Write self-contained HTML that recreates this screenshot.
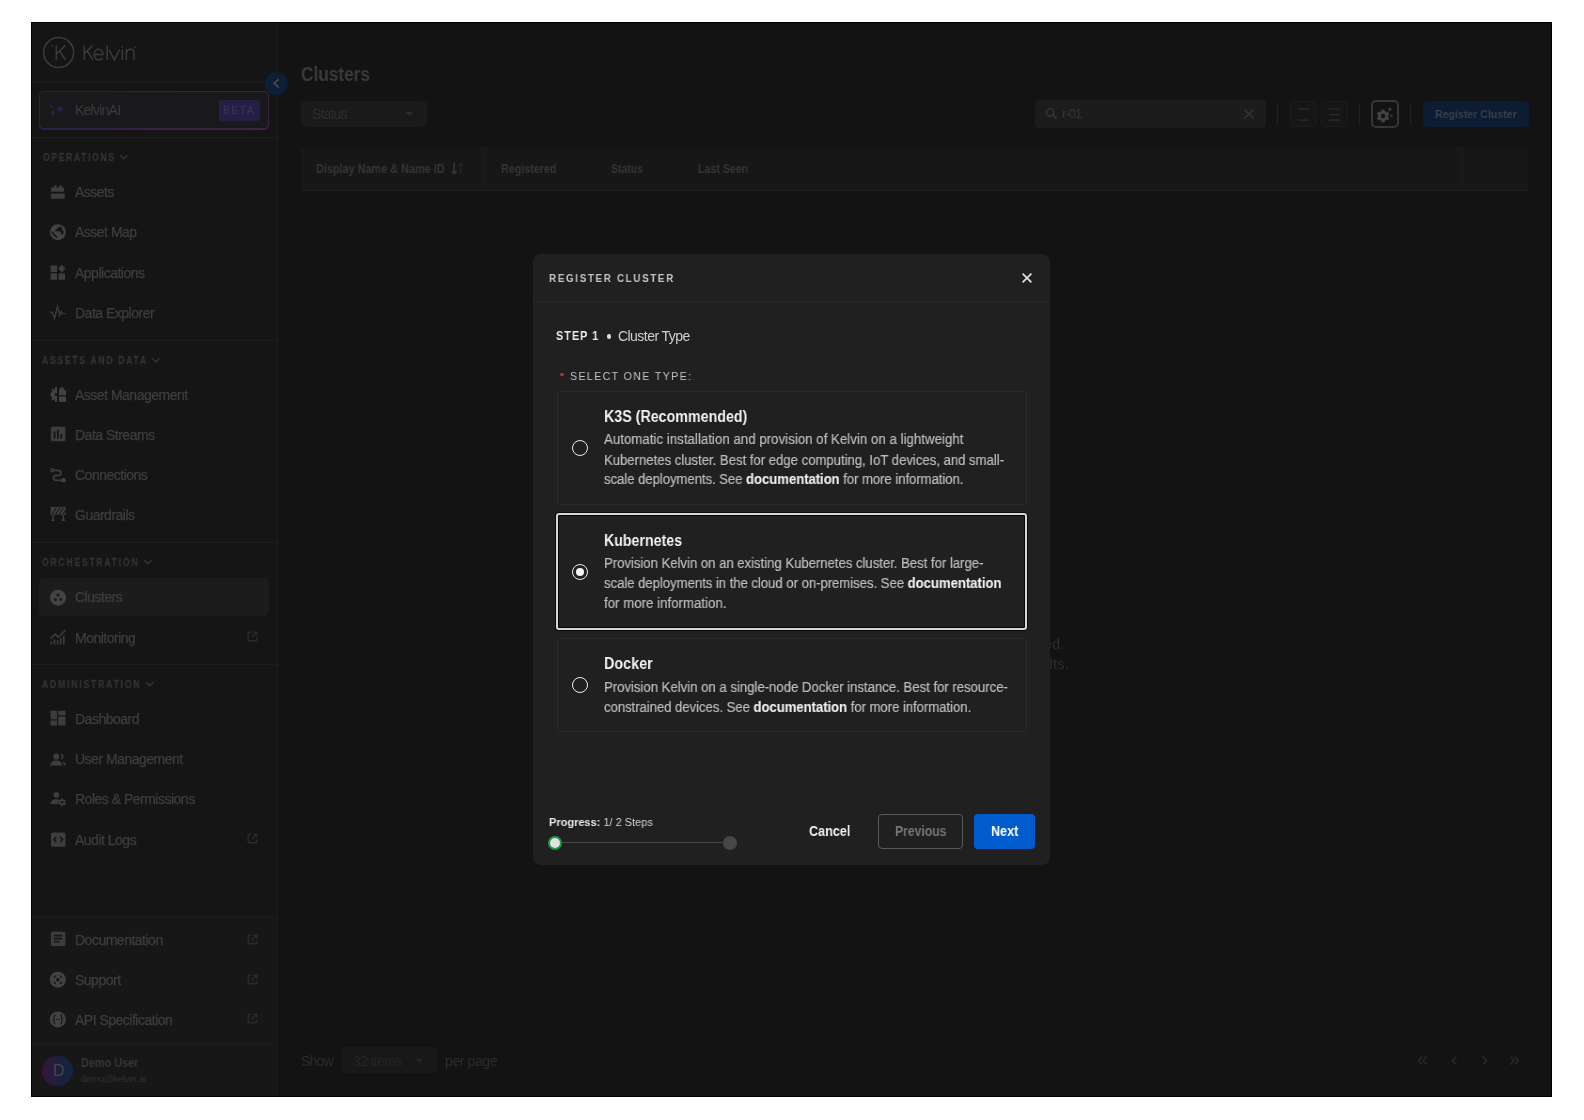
<!DOCTYPE html><html><head><meta charset="utf-8"><style>html,body{margin:0;padding:0;background:#fff;width:1584px;height:1120px;overflow:hidden}body{position:relative;font-family:"Liberation Sans", sans-serif}div[id^=t]{will-change:transform}b{font-weight:700}</style></head><body>
<div style="position:absolute;left:31px;top:22px;width:1521px;height:1075px;background:#000"></div>
<div style="position:absolute;left:32px;top:23px;width:1519px;height:1073px;background:#131313"></div>
<div style="position:absolute;left:32px;top:23px;width:245px;height:1073px;background:#151515"></div>
<div style="position:absolute;left:277px;top:23px;width:1px;height:1073px;background:#1b1b1b"></div>
<div style="position:absolute;left:32px;top:916px;width:245px;height:180px;background:#171717"></div>
<div style="position:absolute;left:32px;top:82px;width:245px;height:1px;background:#1c1c1c"></div>
<div style="position:absolute;left:32px;top:137px;width:245px;height:1px;background:#1c1c1c"></div>
<div style="position:absolute;left:32px;top:340px;width:245px;height:1px;background:#1c1c1c"></div>
<div style="position:absolute;left:32px;top:542px;width:245px;height:1px;background:#1c1c1c"></div>
<div style="position:absolute;left:32px;top:664px;width:245px;height:1px;background:#1c1c1c"></div>
<div style="position:absolute;left:32px;top:916px;width:245px;height:1px;background:#1c1c1c"></div>
<div style="position:absolute;left:32px;top:1043px;width:245px;height:1px;background:#1c1c1c"></div>
<svg style="position:absolute;left:40px;top:34px;overflow:visible" width="100" height="40" viewBox="0 0 100 40"><circle cx="18.65" cy="18.5" r="15" fill="none" stroke="#3b3b3b" stroke-width="1.5"/><path d="M16.3 11.4V25.9M25.4 11.4L16.5 19.7M19.6 17.0L25.4 25.9" fill="none" stroke="#3b3b3b" stroke-width="1.5"/><circle cx="12.3" cy="12.2" r="0.8" fill="#3b3b3b"/><path d="M44.3 11.4V25.9M52.6 11.4L44.6 19.6M47.3 17.0L52.8 25.9" fill="none" stroke="#3b3b3b" stroke-width="1.5"/><path d="M54.4 20.6H63.0C63.0 17.6 61.2 15.3 58.6 15.3C55.9 15.3 54.2 17.6 54.2 20.5C54.2 23.5 56.1 25.9 58.8 25.9C60.5 25.9 61.8 25.1 62.6 23.9" fill="none" stroke="#3b3b3b" stroke-width="1.5"/><path d="M67.2 11.2V25.9M69.1 15.5L74.3 25.9L79.5 15.5M82.3 15.5V25.9M86.4 15.5V25.9M86.4 19.0C87.2 16.2 89.0 15.3 90.6 15.3C92.8 15.3 94.0 16.7 94.0 19.3V25.9" fill="none" stroke="#3b3b3b" stroke-width="1.5"/><circle cx="82.3" cy="12.6" r="0.9" fill="#3b3b3b"/><circle cx="95.2" cy="13.3" r="0.9" fill="#3b3b3b"/></svg>
<div style="position:absolute;left:265.1px;top:71.8px;width:23.4px;height:23.4px;border-radius:50%;background:#0d1f37"></div>
<svg style="position:absolute;left:270px;top:75px;overflow:visible" width="12" height="16" viewBox="0 0 12 16"><path d="M8.8 4.1L4.2 8.3L8.8 12.6" fill="none" stroke="#454545" stroke-width="1.9"/></svg>
<div style="position:absolute;left:38.5px;top:91px;width:230.5px;height:38.5px;background:linear-gradient(90deg,#2d1d4c,#3f2342);border-radius:5px"></div>
<div style="position:absolute;left:39.9px;top:92.4px;width:227.70000000000002px;height:35.69999999999999px;background:#19181a;border-radius:4px"></div>
<svg style="position:absolute;left:46px;top:100px;overflow:visible" width="20" height="20" viewBox="0 0 20 20"><path d="M13.9 4.8Q14.6 8.6 18.4 9.3Q14.6 10.0 13.9 13.8Q13.2 10.0 9.4 9.3Q13.2 8.6 13.9 4.8Z" fill="#2e1e50"/><path d="M6.9 10.1Q7.3 12.7 9.9 13.1Q7.3 13.5 6.9 16.1Q6.5 13.5 3.9 13.1Q6.5 12.7 6.9 10.1Z" fill="#2e1e50"/><circle cx="5.2" cy="6.3" r="1.3" fill="#2e1e50"/></svg>
<div id="t0" style="position:absolute;left:74.80px;top:103.10px;font-size:14px;line-height:1;font-weight:400;color:#3c3c3c;letter-spacing:-0.751px;white-space:nowrap;">KelvinAI</div>
<div style="position:absolute;left:219.3px;top:99.7px;width:40.39999999999998px;height:21.099999999999994px;background:#261f45;border-radius:3px"></div>
<div id="t1" style="position:absolute;left:223.40px;top:104.65px;font-size:11px;line-height:1;font-weight:400;color:#3c3658;letter-spacing:2.026px;white-space:nowrap;transform:scaleX(0.9000);transform-origin:0 0;">BETA</div>
<div id="t2" style="position:absolute;left:42.50px;top:152.70px;font-size:10px;line-height:1;font-weight:700;color:#333333;letter-spacing:1.908px;white-space:nowrap;transform:scaleX(0.8600);transform-origin:0 0;-webkit-text-stroke:0.3px #333333">OPERATIONS</div>
<svg style="position:absolute;left:118.5px;top:153.1px;overflow:visible" width="10" height="8" viewBox="0 0 10 8"><path d="M1.2 2.2L4.8 5.8L8.4 2.2" fill="none" stroke="#353535" stroke-width="1.4"/></svg>
<div id="t3" style="position:absolute;left:42.20px;top:355.60px;font-size:10px;line-height:1;font-weight:700;color:#333333;letter-spacing:1.984px;white-space:nowrap;transform:scaleX(0.8600);transform-origin:0 0;-webkit-text-stroke:0.3px #333333">ASSETS AND DATA</div>
<svg style="position:absolute;left:151.2px;top:356.0px;overflow:visible" width="10" height="8" viewBox="0 0 10 8"><path d="M1.2 2.2L4.8 5.8L8.4 2.2" fill="none" stroke="#353535" stroke-width="1.4"/></svg>
<div id="t4" style="position:absolute;left:42.20px;top:557.80px;font-size:10px;line-height:1;font-weight:700;color:#333333;letter-spacing:2.057px;white-space:nowrap;transform:scaleX(0.8600);transform-origin:0 0;-webkit-text-stroke:0.3px #333333">ORCHESTRATION</div>
<svg style="position:absolute;left:142.8px;top:558.2px;overflow:visible" width="10" height="8" viewBox="0 0 10 8"><path d="M1.2 2.2L4.8 5.8L8.4 2.2" fill="none" stroke="#353535" stroke-width="1.4"/></svg>
<div id="t5" style="position:absolute;left:42.20px;top:679.70px;font-size:10px;line-height:1;font-weight:700;color:#333333;letter-spacing:2.112px;white-space:nowrap;transform:scaleX(0.8600);transform-origin:0 0;-webkit-text-stroke:0.3px #333333">ADMINISTRATION</div>
<svg style="position:absolute;left:144.7px;top:680.1px;overflow:visible" width="10" height="8" viewBox="0 0 10 8"><path d="M1.2 2.2L4.8 5.8L8.4 2.2" fill="none" stroke="#353535" stroke-width="1.4"/></svg>
<div style="position:absolute;left:39px;top:578px;width:230px;height:38px;background:#1c1c1c;border-radius:5px"></div>
<div id="t6" style="position:absolute;left:75.40px;top:185.10px;font-size:14px;line-height:1;font-weight:400;color:#3e3e3e;letter-spacing:-0.500px;white-space:nowrap;-webkit-text-stroke:0.25px #3e3e3e">Assets</div>
<div id="t7" style="position:absolute;left:75.40px;top:225.40px;font-size:14px;line-height:1;font-weight:400;color:#3e3e3e;letter-spacing:-0.500px;white-space:nowrap;-webkit-text-stroke:0.25px #3e3e3e">Asset Map</div>
<div id="t8" style="position:absolute;left:75.40px;top:265.60px;font-size:14px;line-height:1;font-weight:400;color:#3e3e3e;letter-spacing:-0.500px;white-space:nowrap;-webkit-text-stroke:0.25px #3e3e3e">Applications</div>
<div id="t9" style="position:absolute;left:75.40px;top:305.80px;font-size:14px;line-height:1;font-weight:400;color:#3e3e3e;letter-spacing:-0.500px;white-space:nowrap;-webkit-text-stroke:0.25px #3e3e3e">Data Explorer</div>
<div id="t10" style="position:absolute;left:75.40px;top:387.80px;font-size:14px;line-height:1;font-weight:400;color:#3e3e3e;letter-spacing:-0.500px;white-space:nowrap;-webkit-text-stroke:0.25px #3e3e3e">Asset Management</div>
<div id="t11" style="position:absolute;left:75.40px;top:427.70px;font-size:14px;line-height:1;font-weight:400;color:#3e3e3e;letter-spacing:-0.500px;white-space:nowrap;-webkit-text-stroke:0.25px #3e3e3e">Data Streams</div>
<div id="t12" style="position:absolute;left:75.40px;top:468.10px;font-size:14px;line-height:1;font-weight:400;color:#3e3e3e;letter-spacing:-0.500px;white-space:nowrap;-webkit-text-stroke:0.25px #3e3e3e">Connections</div>
<div id="t13" style="position:absolute;left:75.40px;top:508.10px;font-size:14px;line-height:1;font-weight:400;color:#3e3e3e;letter-spacing:-0.500px;white-space:nowrap;-webkit-text-stroke:0.25px #3e3e3e">Guardrails</div>
<div id="t14" style="position:absolute;left:75.40px;top:590.10px;font-size:14px;line-height:1;font-weight:400;color:#3e3e3e;letter-spacing:-0.500px;white-space:nowrap;-webkit-text-stroke:0.25px #3e3e3e">Clusters</div>
<div id="t15" style="position:absolute;left:75.40px;top:630.60px;font-size:14px;line-height:1;font-weight:400;color:#3e3e3e;letter-spacing:-0.500px;white-space:nowrap;-webkit-text-stroke:0.25px #3e3e3e">Monitoring</div>
<div id="t16" style="position:absolute;left:75.40px;top:712.10px;font-size:14px;line-height:1;font-weight:400;color:#3e3e3e;letter-spacing:-0.500px;white-space:nowrap;-webkit-text-stroke:0.25px #3e3e3e">Dashboard</div>
<div id="t17" style="position:absolute;left:75.40px;top:752.40px;font-size:14px;line-height:1;font-weight:400;color:#3e3e3e;letter-spacing:-0.500px;white-space:nowrap;-webkit-text-stroke:0.25px #3e3e3e">User Management</div>
<div id="t18" style="position:absolute;left:75.40px;top:792.40px;font-size:14px;line-height:1;font-weight:400;color:#3e3e3e;letter-spacing:-0.500px;white-space:nowrap;-webkit-text-stroke:0.25px #3e3e3e">Roles &amp; Permissions</div>
<div id="t19" style="position:absolute;left:75.40px;top:832.80px;font-size:14px;line-height:1;font-weight:400;color:#3e3e3e;letter-spacing:-0.500px;white-space:nowrap;-webkit-text-stroke:0.25px #3e3e3e">Audit Logs</div>
<div id="t20" style="position:absolute;left:75.40px;top:933.10px;font-size:14px;line-height:1;font-weight:400;color:#3e3e3e;letter-spacing:-0.500px;white-space:nowrap;-webkit-text-stroke:0.25px #3e3e3e">Documentation</div>
<div id="t21" style="position:absolute;left:75.40px;top:973.40px;font-size:14px;line-height:1;font-weight:400;color:#3e3e3e;letter-spacing:-0.500px;white-space:nowrap;-webkit-text-stroke:0.25px #3e3e3e">Support</div>
<div id="t22" style="position:absolute;left:75.40px;top:1012.70px;font-size:14px;line-height:1;font-weight:400;color:#3e3e3e;letter-spacing:-0.500px;white-space:nowrap;-webkit-text-stroke:0.25px #3e3e3e">API Specification</div>
<svg style="position:absolute;left:50px;top:183px;overflow:visible" width="16" height="16" viewBox="0 0 16 16"><path d="M2.5 4.6H4.3V3.3A1.2 1.2 0 0 1 6.7 3.3V4.6H9.3V3.3A1.2 1.2 0 0 1 11.7 3.3V4.6H14V8.8H1.1V4.6Z" fill="#3d3d3d"/><rect x="1.1" y="10.6" width="13.6" height="5.1" fill="#3d3d3d"/></svg>
<svg style="position:absolute;left:50px;top:223.3px;overflow:visible" width="16" height="16" viewBox="0 0 16 16"><circle cx="7.95" cy="9.2" r="8" fill="#424242"/><path d="M1.9 8.95Q4.6 11.4 6.8 14.45Q4 12.4 1.9 8.95Z" fill="#151515" stroke="#151515" stroke-width="1.3" stroke-linejoin="round"/><path d="M10.75 3.6L7.4 5.4L5.25 8H10L12.3 12.1L13.3 8.95Z" fill="#151515" stroke="#151515" stroke-width="0.6" stroke-linejoin="round"/></svg>
<svg style="position:absolute;left:50px;top:263.5px;overflow:visible" width="16" height="16" viewBox="0 0 16 16"><rect x="0.5" y="1.5" width="6.5" height="6.5" fill="#3d3d3d"/><path d="M11.8 0.8L15.5 4.6L11.8 8.4L8.1 4.6Z" fill="#3d3d3d"/><rect x="0.5" y="9.3" width="6.5" height="6.5" fill="#3d3d3d"/><rect x="8.5" y="9.3" width="6.5" height="6.5" fill="#3d3d3d"/></svg>
<svg style="position:absolute;left:50px;top:303.7px;overflow:visible" width="16" height="16" viewBox="0 0 16 16"><path d="M0.3 8.3H2.4L4.6 14.2L7.5 2.6L9.9 11.1L11.3 7.6L12.9 9.6H15.5" fill="none" stroke="#3d3d3d" stroke-width="1.4"/></svg>
<svg style="position:absolute;left:50px;top:385.7px;overflow:visible" width="16" height="16" viewBox="0 0 16 16"><path d="M6 3.3A5.2 5.2 0 0 0 6 13.7Z" fill="#424242"/><path d="M0.2 7.4H2.2V9.6H0.2Z M1.3 3.6L2.9 2.6L4.3 4.4L2.7 5.5Z M1.3 13.4L2.9 14.4L4.3 12.6L2.7 11.5Z" fill="#424242"/><rect x="4.9" y="1" width="2.1" height="14.9" fill="#424242"/><circle cx="6.2" cy="8.5" r="1.5" fill="#151515"/><path d="M9 4.3H9.6V3.2A1.9 1.9 0 0 1 11.5 1.2H12.1A1.9 1.9 0 0 1 14 3.2V4.3H16V8.9H9Z" fill="#424242"/><rect x="9" y="10.4" width="7" height="5.5" fill="#424242"/></svg>
<svg style="position:absolute;left:50px;top:425.6px;overflow:visible" width="16" height="16" viewBox="0 0 16 16"><rect x="0.8" y="0.8" width="14.6" height="14.4" rx="1.6" fill="#3d3d3d"/><rect x="3.6" y="5.6" width="1.8" height="7" fill="#151515"/><rect x="7" y="3.8" width="1.8" height="8.8" fill="#151515"/><rect x="10.4" y="8.2" width="1.8" height="4.4" fill="#151515"/></svg>
<svg style="position:absolute;left:50px;top:466px;overflow:visible" width="16" height="16" viewBox="0 0 16 16"><circle cx="2.3" cy="4.3" r="1.4" fill="none" stroke="#3e3e3e" stroke-width="1.5"/><path d="M3.8 4.3H8.5A2.5 2.5 0 0 1 8.5 9.3H6A2.5 2.5 0 0 0 6 14.3H12" fill="none" stroke="#3e3e3e" stroke-width="1.7"/><circle cx="13.6" cy="14.3" r="2.2" fill="#434343"/></svg>
<svg style="position:absolute;left:50px;top:506px;overflow:visible" width="16" height="16" viewBox="0 0 16 16"><rect x="0.6" y="0.8" width="15" height="8" fill="#3d3d3d"/><path d="M2.3 8.3L6.2 1.4M5.9 8.3L9.8 1.4M9.5 8.3L13.4 1.4M13.1 8.3L15.6 3.9" stroke="#151515" stroke-width="1"/><path d="M3 9V14.3M13.2 9V14.3M1.3 14.3H4.7M11.5 14.3H14.9" stroke="#3d3d3d" stroke-width="1.5"/></svg>
<svg style="position:absolute;left:50px;top:588px;overflow:visible" width="16" height="16" viewBox="0 0 16 16"><circle cx="8" cy="9.7" r="8" fill="#434343"/><circle cx="8" cy="7" r="1.6" fill="#1c1c1c"/><circle cx="5.3" cy="11.5" r="1.6" fill="#1c1c1c"/><circle cx="10.7" cy="11.5" r="1.6" fill="#1c1c1c"/></svg>
<svg style="position:absolute;left:50px;top:628.5px;overflow:visible" width="16" height="16" viewBox="0 0 16 16"><path d="M0.6 9.6L5.1 5.2L8.4 8.2L15.4 1.2" fill="none" stroke="#3d3d3d" stroke-width="1.6"/><path d="M1.4 12.6V15.6M4.5 10.6V15.6M7.6 11.2V15.6M10.7 8.8V15.6M13.8 6.6V15.6" stroke="#3d3d3d" stroke-width="1.7"/></svg>
<svg style="position:absolute;left:50px;top:710px;overflow:visible" width="16" height="16" viewBox="0 0 16 16"><rect x="0.5" y="0.7" width="6.5" height="8.6" fill="#3d3d3d"/><rect x="8.2" y="0.7" width="7.3" height="4.6" fill="#3d3d3d"/><rect x="0.5" y="10.5" width="6.5" height="5" fill="#3d3d3d"/><rect x="8.2" y="6.5" width="7.3" height="9" fill="#3d3d3d"/></svg>
<svg style="position:absolute;left:50px;top:751.6999999999999px;overflow:visible" width="16" height="16" viewBox="0 0 16 16"><circle cx="6.2" cy="4.6" r="3.1" fill="#3d3d3d"/><path d="M0.2 13.5C0.2 10.3 2.6 8.6 6.2 8.6C9.8 8.6 12.2 10.3 12.2 13.5Z" fill="#3d3d3d"/><path d="M10.4 1.5A3.1 3.1 0 0 1 10.4 7.7A4.2 4.2 0 0 0 10.4 1.5Z" fill="#3d3d3d"/><path d="M12.3 9.2C14.5 9.9 16 11.4 16 13.5H13.6C13.6 11.8 13.2 10.4 12.3 9.2Z" fill="#3d3d3d"/></svg>
<svg style="position:absolute;left:50px;top:791.3px;overflow:visible" width="16" height="16" viewBox="0 0 16 16"><circle cx="6.4" cy="3.8" r="2.9" fill="#3d3d3d"/><path d="M0.4 13.1C0.4 10.1 2.8 8.2 6.2 8.2C7.2 8.2 8 8.3 8.6 8.6L8.2 13.1Z" fill="#3d3d3d"/><path d="M12.98 14.27L13.04 15.29L11.16 15.29L11.22 14.27L9.97 13.55L9.11 14.11L8.17 12.49L9.09 12.02L9.09 10.58L8.17 10.11L9.11 8.49L9.97 9.05L11.22 8.33L11.16 7.31L13.04 7.31L12.98 8.33L14.23 9.05L15.09 8.49L16.03 10.11L15.11 10.58L15.11 12.02L16.03 12.49L15.09 14.11L14.23 13.55Z" fill="#3d3d3d"/><circle cx="12.1" cy="11.3" r="1.3" fill="#151515"/></svg>
<svg style="position:absolute;left:50px;top:830.7px;overflow:visible" width="16" height="16" viewBox="0 0 16 16"><rect x="1" y="1.4" width="14.4" height="14.4" rx="1.6" fill="#3d3d3d"/><path d="M6.2 6L3.9 8.6L6.2 11.2M10.2 6L12.5 8.6L10.2 11.2" fill="none" stroke="#151515" stroke-width="1.6"/></svg>
<svg style="position:absolute;left:50px;top:931px;overflow:visible" width="16" height="16" viewBox="0 0 16 16"><rect x="1" y="0.7" width="14.4" height="14.4" rx="1.6" fill="#3d3d3d"/><path d="M3.8 4.6H12.3M3.8 7.6H12.3M3.8 10.6H9.4" stroke="#171717" stroke-width="1.6"/></svg>
<svg style="position:absolute;left:50px;top:971.3px;overflow:visible" width="16" height="16" viewBox="0 0 16 16"><circle cx="7.86" cy="8.7" r="8" fill="#424242"/><circle cx="7.86" cy="8.7" r="1.8" fill="#171717"/><rect x="-1.6" y="-0.75" width="3.2" height="1.5" rx="0.7" fill="#171717" transform="translate(7.86 8.7) rotate(45) translate(0 -4.4)"/><rect x="-1.6" y="-0.75" width="3.2" height="1.5" rx="0.7" fill="#171717" transform="translate(7.86 8.7) rotate(135) translate(0 -4.4)"/><rect x="-1.6" y="-0.75" width="3.2" height="1.5" rx="0.7" fill="#171717" transform="translate(7.86 8.7) rotate(225) translate(0 -4.4)"/><rect x="-1.6" y="-0.75" width="3.2" height="1.5" rx="0.7" fill="#171717" transform="translate(7.86 8.7) rotate(315) translate(0 -4.4)"/></svg>
<svg style="position:absolute;left:50px;top:1010.5999999999999px;overflow:visible" width="16" height="16" viewBox="0 0 16 16"><circle cx="7.86" cy="8.4" r="8" fill="#424242"/><path d="M5.4 3.8C4 3.8 4.1 5.8 4.1 6.8C4.1 7.6 3.5 8.3 2.8 8.4C3.5 8.5 4.1 9.2 4.1 10C4.1 11 4 13 5.4 13M10.3 3.8C11.7 3.8 11.6 5.8 11.6 6.8C11.6 7.6 12.2 8.3 12.9 8.4C12.2 8.5 11.6 9.2 11.6 10C11.6 11 11.7 13 10.3 13" fill="none" stroke="#171717" stroke-width="1.2"/><circle cx="6.3" cy="8.4" r="0.6" fill="#171717"/><circle cx="7.86" cy="8.4" r="0.6" fill="#171717"/><circle cx="9.4" cy="8.4" r="0.6" fill="#171717"/></svg>
<svg style="position:absolute;left:246.5px;top:631.0px;overflow:visible" width="11" height="11" viewBox="0 0 11 11"><path d="M4.4 1.2H2.2A1 1 0 0 0 1.2 2.2V8.8A1 1 0 0 0 2.2 9.8H8.8A1 1 0 0 0 9.8 8.8V6.6" fill="none" stroke="#2b2b2b" stroke-width="1.4"/><path d="M4.8 6.2L9.8 1.2M6.6 1.2H9.8V4.4" fill="none" stroke="#2b2b2b" stroke-width="1.4"/></svg>
<svg style="position:absolute;left:246.5px;top:833.2px;overflow:visible" width="11" height="11" viewBox="0 0 11 11"><path d="M4.4 1.2H2.2A1 1 0 0 0 1.2 2.2V8.8A1 1 0 0 0 2.2 9.8H8.8A1 1 0 0 0 9.8 8.8V6.6" fill="none" stroke="#2b2b2b" stroke-width="1.4"/><path d="M4.8 6.2L9.8 1.2M6.6 1.2H9.8V4.4" fill="none" stroke="#2b2b2b" stroke-width="1.4"/></svg>
<svg style="position:absolute;left:246.5px;top:933.5px;overflow:visible" width="11" height="11" viewBox="0 0 11 11"><path d="M4.4 1.2H2.2A1 1 0 0 0 1.2 2.2V8.8A1 1 0 0 0 2.2 9.8H8.8A1 1 0 0 0 9.8 8.8V6.6" fill="none" stroke="#2b2b2b" stroke-width="1.4"/><path d="M4.8 6.2L9.8 1.2M6.6 1.2H9.8V4.4" fill="none" stroke="#2b2b2b" stroke-width="1.4"/></svg>
<svg style="position:absolute;left:246.5px;top:973.8px;overflow:visible" width="11" height="11" viewBox="0 0 11 11"><path d="M4.4 1.2H2.2A1 1 0 0 0 1.2 2.2V8.8A1 1 0 0 0 2.2 9.8H8.8A1 1 0 0 0 9.8 8.8V6.6" fill="none" stroke="#2b2b2b" stroke-width="1.4"/><path d="M4.8 6.2L9.8 1.2M6.6 1.2H9.8V4.4" fill="none" stroke="#2b2b2b" stroke-width="1.4"/></svg>
<svg style="position:absolute;left:246.5px;top:1013.0999999999999px;overflow:visible" width="11" height="11" viewBox="0 0 11 11"><path d="M4.4 1.2H2.2A1 1 0 0 0 1.2 2.2V8.8A1 1 0 0 0 2.2 9.8H8.8A1 1 0 0 0 9.8 8.8V6.6" fill="none" stroke="#2b2b2b" stroke-width="1.4"/><path d="M4.8 6.2L9.8 1.2M6.6 1.2H9.8V4.4" fill="none" stroke="#2b2b2b" stroke-width="1.4"/></svg>
<div style="position:absolute;left:42.3px;top:1055.8px;width:30.6px;height:30.6px;border-radius:50%;background:linear-gradient(90deg,#33163a,#0f2640)"></div>
<div id="t23" style="position:absolute;left:52.60px;top:1063.20px;font-size:16px;line-height:1;font-weight:400;color:#474747;letter-spacing:-1.062px;white-space:nowrap;">D</div>
<div id="t24" style="position:absolute;left:81.30px;top:1056.70px;font-size:12px;line-height:1;font-weight:700;color:#363636;letter-spacing:0.000px;white-space:nowrap;transform:scaleX(0.9044);transform-origin:0 0;">Demo User</div>
<div id="t25" style="position:absolute;left:81.30px;top:1074.42px;font-size:9.5px;line-height:1;font-weight:400;color:#313131;letter-spacing:-0.195px;white-space:nowrap;">demo@kelvin.ai</div>
<div id="t26" style="position:absolute;left:301.30px;top:64.00px;font-size:20px;line-height:1;font-weight:700;color:#3a3a3a;letter-spacing:0.000px;white-space:nowrap;transform:scaleX(0.8622);transform-origin:0 0;">Clusters</div>
<div style="position:absolute;left:301.3px;top:100.9px;width:126.0px;height:26.599999999999994px;background:#1a1a1a;border-radius:4px"></div>
<div id="t27" style="position:absolute;left:311.70px;top:107.20px;font-size:14px;line-height:1;font-weight:400;color:#2e2e2e;letter-spacing:-0.841px;white-space:nowrap;">Status</div>
<svg style="position:absolute;left:405px;top:111px;overflow:visible" width="9" height="6" viewBox="0 0 9 6"><path d="M0.6 1H8.2L4.4 5Z" fill="#2e2e2e"/></svg>
<div style="position:absolute;left:301px;top:146.9px;width:1227.4px;height:43.099999999999994px;background:#171717"></div>
<div style="position:absolute;left:301px;top:190px;width:1227.4px;height:1px;background:#1d1d1d"></div>
<div style="position:absolute;left:484.3px;top:146.9px;width:1.0px;height:43.099999999999994px;background:#1b1b1b"></div>
<div style="position:absolute;left:1461.8px;top:146.9px;width:1.0px;height:43.099999999999994px;background:#1b1b1b"></div>
<div id="t28" style="position:absolute;left:316.40px;top:162.80px;font-size:12px;line-height:1;font-weight:700;color:#363636;letter-spacing:0.000px;white-space:nowrap;transform:scaleX(0.9052);transform-origin:0 0;">Display Name &amp; Name ID</div>
<svg style="position:absolute;left:451px;top:162px;overflow:visible" width="14" height="13" viewBox="0 0 14 13"><path d="M3.2 1V11.4M0.9 9L3.2 11.6L5.5 9" fill="none" stroke="#353535" stroke-width="1.6"/><path d="M9.8 11.6V1.4M8.1 3.4L9.8 1.2L11.5 3.4" fill="none" stroke="#303030" stroke-width="0.9"/></svg>
<div id="t29" style="position:absolute;left:500.50px;top:162.80px;font-size:12px;line-height:1;font-weight:700;color:#363636;letter-spacing:0.000px;white-space:nowrap;transform:scaleX(0.8931);transform-origin:0 0;">Registered</div>
<div id="t30" style="position:absolute;left:611.00px;top:162.80px;font-size:12px;line-height:1;font-weight:700;color:#363636;letter-spacing:0.000px;white-space:nowrap;transform:scaleX(0.8695);transform-origin:0 0;">Status</div>
<div id="t31" style="position:absolute;left:698.20px;top:162.80px;font-size:12px;line-height:1;font-weight:700;color:#363636;letter-spacing:0.000px;white-space:nowrap;transform:scaleX(0.8853);transform-origin:0 0;">Last Seen</div>
<div id="t32" style="position:absolute;left:851.00px;top:637.10px;font-size:14px;line-height:1;font-weight:400;color:#2e2e2e;letter-spacing:0.114px;white-space:nowrap;">No clusters have been registered.</div>
<div id="t33" style="position:absolute;left:806.50px;top:657.10px;font-size:14px;line-height:1;font-weight:400;color:#2e2e2e;letter-spacing:0.558px;white-space:nowrap;">Try adjusting your filters to see results.</div>
<div style="position:absolute;left:1035px;top:100.4px;width:230.5999999999999px;height:27.39999999999999px;background:#1c1c1c;border-radius:4px"></div>
<svg style="position:absolute;left:1044px;top:106px;overflow:visible" width="16" height="16" viewBox="0 0 16 16"><circle cx="6.1" cy="6.3" r="3.6" fill="none" stroke="#353535" stroke-width="1.5"/><path d="M8.8 9L12.5 12.7" stroke="#353535" stroke-width="1.8"/></svg>
<div id="t34" style="position:absolute;left:1061.90px;top:107.23px;font-size:13.5px;line-height:1;font-weight:400;color:#353535;letter-spacing:-1.272px;white-space:nowrap;">r-01</div>
<svg style="position:absolute;left:1243px;top:108px;overflow:visible" width="12" height="12" viewBox="0 0 12 12"><path d="M1.5 1.5L10.5 10.5M10.5 1.5L1.5 10.5" stroke="#363636" stroke-width="1.4"/></svg>
<div style="position:absolute;left:1277.2px;top:102.8px;width:1.0px;height:22.700000000000003px;background:#222222"></div>
<div style="position:absolute;left:1359.2px;top:102.8px;width:1.0px;height:22.700000000000003px;background:#222222"></div>
<div style="position:absolute;left:1410.3px;top:102.8px;width:1.0px;height:22.700000000000003px;background:#222222"></div>
<div style="position:absolute;left:1290px;top:100.6px;width:27px;height:26.60000000000001px;box-sizing:border-box;background:#161616;border:1px solid #1c1c1c;border-radius:3px"></div>
<div style="position:absolute;left:1320.8px;top:100.6px;width:26.799999999999955px;height:26.60000000000001px;box-sizing:border-box;background:#161616;border:1px solid #1c1c1c;border-radius:3px"></div>
<svg style="position:absolute;left:1290px;top:100.6px;overflow:visible" width="27" height="27" viewBox="0 0 27 27"><path d="M8 8.2H19M8 19.2H19" stroke="#2c2c2c" stroke-width="1.2"/></svg>
<svg style="position:absolute;left:1320.8px;top:100.6px;overflow:visible" width="27" height="27" viewBox="0 0 27 27"><path d="M8 8H19M8 13.6H19M8 19.2H19" stroke="#2c2c2c" stroke-width="1.2"/></svg>
<div style="position:absolute;left:1371px;top:100.2px;width:27.799999999999955px;height:27.999999999999986px;box-sizing:border-box;border:2px solid #363636;border-radius:5px"></div>
<svg style="position:absolute;left:1371.4px;top:100.6px;overflow:visible" width="27" height="27" viewBox="0 0 27 27"><path d="M13.61 20.08L13.61 21.43L10.59 21.43L10.59 20.08L8.45 18.84L7.29 19.52L5.78 16.91L6.95 16.24L6.95 13.76L5.78 13.09L7.29 10.48L8.45 11.16L10.59 9.92L10.59 8.57L13.61 8.57L13.61 9.92L15.75 11.16L16.91 10.48L18.42 13.09L17.25 13.76L17.25 16.24L18.42 16.91L16.91 19.52L15.75 18.84Z" fill="#424242"/><circle cx="12" cy="15" r="2.2" fill="#131313"/><path d="M18.9 5.7Q19.3 7.8 21.4 8.2Q19.3 8.6 18.9 10.7Q18.5 8.6 16.4 8.2Q18.5 7.8 18.9 5.7Z M20.5 13.1Q20.8 14.4 22.1 14.7Q20.8 15 20.5 16.3Q20.2 15 18.9 14.7Q20.2 14.4 20.5 13.1Z" fill="#404040"/></svg>
<div style="position:absolute;left:1422.5px;top:100.6px;width:106.20000000000005px;height:26.700000000000003px;background:#0c1c33;border-radius:4px"></div>
<div id="t35" style="position:absolute;left:1434.50px;top:108.75px;font-size:11px;line-height:1;font-weight:700;color:#38404b;letter-spacing:0.000px;white-space:nowrap;transform:scaleX(0.9625);transform-origin:0 0;">Register Cluster</div>
<div id="t36" style="position:absolute;left:301.20px;top:1053.50px;font-size:14px;line-height:1;font-weight:400;color:#2c2c2c;letter-spacing:-0.844px;white-space:nowrap;">Show</div>
<div style="position:absolute;left:341px;top:1047.3px;width:96px;height:26.0px;background:#181818;border-radius:4px"></div>
<div id="t37" style="position:absolute;left:352.50px;top:1053.50px;font-size:14px;line-height:1;font-weight:400;color:#262626;letter-spacing:-0.560px;white-space:nowrap;">32 items</div>
<svg style="position:absolute;left:415px;top:1058px;overflow:visible" width="9" height="6" viewBox="0 0 9 6"><path d="M0.6 1H8.2L4.4 5Z" fill="#262626"/></svg>
<div id="t38" style="position:absolute;left:445.30px;top:1053.50px;font-size:14px;line-height:1;font-weight:400;color:#2c2c2c;letter-spacing:-0.397px;white-space:nowrap;">per page</div>
<svg style="position:absolute;left:1416px;top:1055px;overflow:visible" width="120" height="12" viewBox="0 0 120 12"><path d="M6.2 1.6L2.6 5.6L6.2 9.6M10.6 1.6L7 5.6L10.6 9.6" fill="none" stroke="#282828" stroke-width="1.6"/><path d="M40.4 1.6L36.4 5.6L40.4 9.6" fill="none" stroke="#282828" stroke-width="1.6"/><path d="M66.6 1.6L70.6 5.6L66.6 9.6" fill="none" stroke="#282828" stroke-width="1.6"/><path d="M94.4 1.6L98 5.6L94.4 9.6M98.8 1.6L102.4 5.6L98.8 9.6" fill="none" stroke="#282828" stroke-width="1.6"/></svg>
<div style="position:absolute;left:533px;top:254px;width:517px;height:610.5px;background:#202020;border-radius:8px"></div>
<div style="position:absolute;left:533px;top:301px;width:517px;height:1px;background:#2a2a2a"></div>
<div id="t39" style="position:absolute;left:548.75px;top:272.62px;font-size:11.5px;line-height:1;font-weight:700;color:#c2c2c2;letter-spacing:1.879px;white-space:nowrap;transform:scaleX(0.8600);transform-origin:0 0;">REGISTER CLUSTER</div>
<svg style="position:absolute;left:1021px;top:272px;overflow:visible" width="12" height="12" viewBox="0 0 12 12"><path d="M1.6 1.6L10.4 10.4M10.4 1.6L1.6 10.4" stroke="#e0e0e0" stroke-width="1.7"/></svg>
<div id="t40" style="position:absolute;left:556.10px;top:329.77px;font-size:12.5px;line-height:1;font-weight:700;color:#ececec;letter-spacing:1.019px;white-space:nowrap;transform:scaleX(0.8800);transform-origin:0 0;">STEP 1</div>
<div style="position:absolute;left:606.8px;top:334.2px;width:4.4px;height:4.4px;border-radius:50%;background:#dddddd"></div>
<div id="t41" style="position:absolute;left:618.40px;top:328.50px;font-size:14px;line-height:1;font-weight:400;color:#d0d0d0;letter-spacing:-0.549px;white-space:nowrap;">Cluster Type</div>
<div style="position:absolute;left:560.4px;top:372.6px;width:3.2px;height:3.2px;border-radius:50%;background:#c4262d"></div>
<div id="t42" style="position:absolute;left:569.50px;top:371.23px;font-size:11.5px;line-height:1;font-weight:400;color:#c4c4c4;letter-spacing:1.510px;white-space:nowrap;transform:scaleX(0.9200);transform-origin:0 0;">SELECT ONE TYPE:</div>
<div style="position:absolute;left:556.5px;top:390.5px;width:470.0999999999999px;height:114.5px;box-sizing:border-box;border:1px solid #2a2a2a;border-radius:3px"></div>
<div style="position:absolute;left:555.6px;top:512.8px;width:471.80000000000007px;height:117.40000000000009px;box-sizing:border-box;border:2px solid #d6d6d6;border-radius:3px;background:#202020;box-shadow:inset 0 0 0 1px #050505, 0 0 0 1px #0a0a0a"></div>
<div style="position:absolute;left:556.5px;top:637.9px;width:470.0999999999999px;height:93.89999999999998px;box-sizing:border-box;border:1px solid #2a2a2a;border-radius:3px"></div>
<div style="position:absolute;left:572px;top:439.9px;width:16px;height:16px;box-sizing:border-box;border:1.6px solid #ececec;border-radius:50%"></div>
<div style="position:absolute;left:572px;top:564.1px;width:16px;height:16px;box-sizing:border-box;border:1.6px solid #ececec;border-radius:50%"></div>
<div style="position:absolute;left:575.7px;top:567.8000000000001px;width:8.6px;height:8.6px;border-radius:50%;background:#f4f4f4"></div>
<div style="position:absolute;left:572px;top:677px;width:16px;height:16px;box-sizing:border-box;border:1.6px solid #ececec;border-radius:50%"></div>
<div id="t43" style="position:absolute;left:603.60px;top:409.20px;font-size:16px;line-height:1;font-weight:700;color:#f2f2f2;letter-spacing:0.000px;white-space:nowrap;transform:scaleX(0.8905);transform-origin:0 0;">K3S (Recommended)</div>
<div id="t44" style="position:absolute;left:603.60px;top:432.00px;font-size:14px;line-height:1;font-weight:400;color:#bdbdbd;letter-spacing:0.066px;white-space:nowrap;transform:scaleX(0.9400);transform-origin:0 0;-webkit-text-stroke:0.2px #bdbdbd">Automatic installation and provision of Kelvin on a lightweight</div>
<div id="t45" style="position:absolute;left:603.60px;top:452.50px;font-size:14px;line-height:1;font-weight:400;color:#bdbdbd;letter-spacing:-0.021px;white-space:nowrap;transform:scaleX(0.9400);transform-origin:0 0;-webkit-text-stroke:0.2px #bdbdbd">Kubernetes cluster. Best for edge computing, IoT devices, and small-</div>
<div id="t46" style="position:absolute;left:603.60px;top:472.20px;font-size:14px;line-height:1;font-weight:400;color:#bdbdbd;letter-spacing:-0.063px;white-space:nowrap;transform:scaleX(0.9400);transform-origin:0 0;-webkit-text-stroke:0.2px #bdbdbd">scale deployments. See <b style="color:#f2f2f2">documentation</b> for more information.</div>
<div id="t47" style="position:absolute;left:603.60px;top:532.60px;font-size:16px;line-height:1;font-weight:700;color:#f2f2f2;letter-spacing:0.000px;white-space:nowrap;transform:scaleX(0.8860);transform-origin:0 0;">Kubernetes</div>
<div id="t48" style="position:absolute;left:603.60px;top:556.30px;font-size:14px;line-height:1;font-weight:400;color:#bdbdbd;letter-spacing:-0.028px;white-space:nowrap;transform:scaleX(0.9400);transform-origin:0 0;-webkit-text-stroke:0.2px #bdbdbd">Provision Kelvin on an existing Kubernetes cluster. Best for large-</div>
<div id="t49" style="position:absolute;left:603.60px;top:576.20px;font-size:14px;line-height:1;font-weight:400;color:#bdbdbd;letter-spacing:-0.045px;white-space:nowrap;transform:scaleX(0.9400);transform-origin:0 0;-webkit-text-stroke:0.2px #bdbdbd">scale deployments in the cloud or on-premises. See <b style="color:#f2f2f2">documentation</b></div>
<div id="t50" style="position:absolute;left:603.60px;top:596.20px;font-size:14px;line-height:1;font-weight:400;color:#bdbdbd;letter-spacing:0.057px;white-space:nowrap;transform:scaleX(0.9400);transform-origin:0 0;-webkit-text-stroke:0.2px #bdbdbd">for more information.</div>
<div id="t51" style="position:absolute;left:603.60px;top:656.40px;font-size:16px;line-height:1;font-weight:700;color:#f2f2f2;letter-spacing:0.000px;white-space:nowrap;transform:scaleX(0.8977);transform-origin:0 0;">Docker</div>
<div id="t52" style="position:absolute;left:603.60px;top:679.70px;font-size:14px;line-height:1;font-weight:400;color:#bdbdbd;letter-spacing:-0.010px;white-space:nowrap;transform:scaleX(0.9400);transform-origin:0 0;-webkit-text-stroke:0.2px #bdbdbd">Provision Kelvin on a single-node Docker instance. Best for resource-</div>
<div id="t53" style="position:absolute;left:603.60px;top:699.90px;font-size:14px;line-height:1;font-weight:400;color:#bdbdbd;letter-spacing:-0.054px;white-space:nowrap;transform:scaleX(0.9400);transform-origin:0 0;-webkit-text-stroke:0.2px #bdbdbd">constrained devices. See <b style="color:#f2f2f2">documentation</b> for more information.</div>
<div id="t54" style="position:absolute;left:548.50px;top:816.62px;font-size:11.5px;line-height:1;font-weight:400;color:#d2d2d2;letter-spacing:0.000px;white-space:nowrap;transform:scaleX(0.9552);transform-origin:0 0;"><b style="color:#e6e6e6">Progress:</b> 1/ 2 Steps</div>
<div style="position:absolute;left:555px;top:841.8px;width:175px;height:1.5px;background:#444"></div>
<div style="position:absolute;left:548.1px;top:835.5px;width:14px;height:14px;box-sizing:border-box;border:2.2px solid #1a9c48;border-radius:50%;background:#e2e2e2"></div>
<div style="position:absolute;left:723px;top:835.5px;width:14px;height:14px;border-radius:50%;background:#474747"></div>
<div id="t55" style="position:absolute;left:808.70px;top:823.60px;font-size:14px;line-height:1;font-weight:700;color:#f0f0f0;letter-spacing:0.000px;white-space:nowrap;transform:scaleX(0.8994);transform-origin:0 0;">Cancel</div>
<div style="position:absolute;left:878.1px;top:814.1px;width:84.60000000000002px;height:34.5px;box-sizing:border-box;border:1.5px solid #595959;border-radius:4px"></div>
<div id="t56" style="position:absolute;left:894.50px;top:823.60px;font-size:14px;line-height:1;font-weight:700;color:#767676;letter-spacing:0.000px;white-space:nowrap;transform:scaleX(0.8708);transform-origin:0 0;">Previous</div>
<div style="position:absolute;left:973.7px;top:814.1px;width:61.200000000000045px;height:34.5px;background:#005bcc;border-radius:4px"></div>
<div id="t57" style="position:absolute;left:990.60px;top:823.60px;font-size:14px;line-height:1;font-weight:700;color:#ffffff;letter-spacing:0.000px;white-space:nowrap;transform:scaleX(0.8992);transform-origin:0 0;">Next</div>
</body></html>
